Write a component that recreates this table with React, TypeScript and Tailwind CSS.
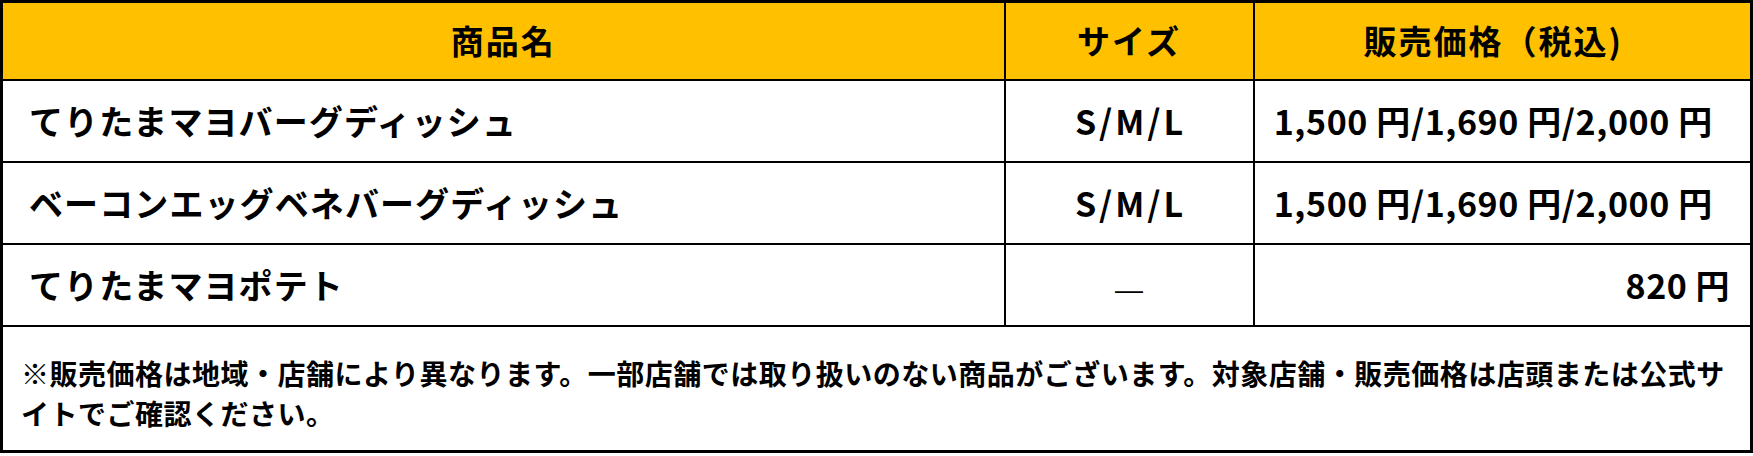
const rows = [
  {
    name: "てりたまマヨバーグディッシュ",
    size: "S/M/L",
    price: "1,500 円/1,690 円/2,000 円",
    align: "center",
  },
  {
    name: "ベーコンエッグベネバーグディッシュ",
    size: "S/M/L",
    price: "1,500 円/1,690 円/2,000 円",
    align: "center",
  },
  {
    name: "てりたまマヨポテト",
    size: "—",
    price: "820 円",
    align: "right",
  },
];

export default function App() {
  return (
    <div
      className="w-[1753px] h-[456px] bg-white text-black"
      style={{ fontFamily: '"Noto Sans CJK JP", "Noto Sans", sans-serif' }}
    >
      <table className="w-full border-collapse border-[3px] border-black table-fixed">
        <colgroup>
          <col className="w-[1003px]" />
          <col className="w-[249px]" />
          <col />
        </colgroup>
        <thead>
          {/* header row */}
          <tr className="h-[78px] bg-[#ffc000] text-[33px] font-bold tracking-[2px]">
            <th className="border-2 border-black text-center">商品名</th>
            <th className="border-2 border-black text-center">サイズ</th>
            <th className="border-2 border-black text-center pr-[18px]">
              販売価格（税込)
            </th>
          </tr>
        </thead>
        <tbody className="text-[34px] font-bold">
          {rows.map((row) => (
            <tr key={row.name} className="h-[82px]">
              <td className="border-2 border-black pl-[26px] tracking-[1.1px]">
                {row.name}
              </td>
              <td className="border-2 border-black text-center">
                {row.size === "—" ? (
                  <span
                    className="font-normal text-[28px]"
                    style={{ fontFamily: '"Liberation Sans", sans-serif' }}
                  >
                    —
                  </span>
                ) : (
                  <span className="tracking-[3px] pl-[3px]">{row.size}</span>
                )}
              </td>
              <td
                className={
                  row.align === "right"
                    ? "border-2 border-black text-right pr-5 tracking-[0.5px]"
                    : "border-2 border-black text-center pr-[18px] tracking-[0.6px]"
                }
              >
                {row.price}
              </td>
            </tr>
          ))}
          {/* footnote */}
          <tr className="h-[126px]">
            <td
              colSpan={3}
              className="border-2 border-black pl-[18px] pr-0 pt-[10px] text-[28px] leading-[40px] tracking-[0.5px] whitespace-nowrap"
            >
              ※販売価格は地域・店舗により異なります。一部店舗では取り扱いのない商品がございます。対象店舗・販売価格は店頭または公式サ
              <br />
              イトでご確認ください。
            </td>
          </tr>
        </tbody>
      </table>
    </div>
  );
}
